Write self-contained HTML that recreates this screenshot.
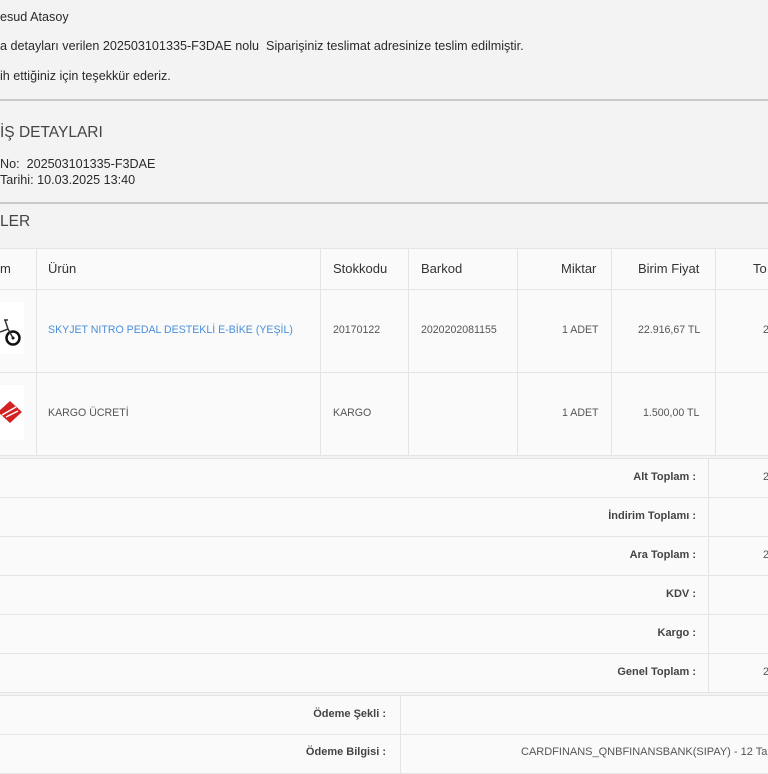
<!DOCTYPE html>
<html><head><meta charset="utf-8"><style>
*{margin:0;padding:0;box-sizing:border-box}
body{width:768px;height:768px;overflow:hidden;background:#f3f3f3;font-family:"Liberation Sans",sans-serif;color:#333;position:relative}
.a{position:absolute;white-space:nowrap}
.t{font-size:12.6px;color:#2a2a2a}
.hr{position:absolute;left:0;width:768px;height:2px;background:#c9c9c9}
.c{position:absolute;background:#fafafa;border:1px solid #e4e4e4}
.th{font-size:13px;color:#333}
.td{font-size:10.6px;color:#555}
.lb{font-size:11px;color:#444;font-weight:bold}
</style></head><body>
<div class="a t" style="left:0;top:10px">esud Atasoy</div>
<div class="a t" style="left:0;top:39px">a detayları verilen 202503101335-F3DAE nolu&nbsp; Siparişiniz teslimat adresinize teslim edilmiştir.</div>
<div class="a t" style="left:0;top:69px">ih ettiğiniz için teşekkür ederiz.</div>
<div class="hr" style="top:99px"></div>
<div class="a" style="left:0;top:124px;font-size:15.5px;color:#444">İŞ DETAYLARI</div>
<div class="a t" style="left:0;top:157px">No:&nbsp; 202503101335-F3DAE</div>
<div class="a t" style="left:0;top:173px">Tarihi: 10.03.2025 13:40</div>
<div class="hr" style="top:202px"></div>
<div class="a" style="left:0;top:213px;font-size:15.5px;color:#444">LER</div>

<div class="c" style="left:-2px;top:248px;width:39px;height:42px"></div>
<div class="c" style="left:36px;top:248px;width:285px;height:42px"></div>
<div class="c" style="left:320px;top:248px;width:89px;height:42px"></div>
<div class="c" style="left:408px;top:248px;width:110px;height:42px"></div>
<div class="c" style="left:517px;top:248px;width:95px;height:42px"></div>
<div class="c" style="left:611px;top:248px;width:105px;height:42px"></div>
<div class="c" style="left:715px;top:248px;width:60px;height:42px"></div>
<div class="a th" style="left:0;top:261px">m</div>
<div class="a th" style="left:48px;top:261px">Ürün</div>
<div class="a th" style="left:333px;top:261px">Stokkodu</div>
<div class="a th" style="left:421px;top:261px">Barkod</div>
<div class="a th" style="left:561px;top:261px">Miktar</div>
<div class="a th" style="left:638px;top:261px">Birim Fiyat</div>
<div class="a th" style="left:753px;top:261px">To</div>

<div class="c" style="left:-2px;top:289px;width:39px;height:84px"></div>
<div class="c" style="left:36px;top:289px;width:285px;height:84px"></div>
<div class="c" style="left:320px;top:289px;width:89px;height:84px"></div>
<div class="c" style="left:408px;top:289px;width:110px;height:84px"></div>
<div class="c" style="left:517px;top:289px;width:95px;height:84px"></div>
<div class="c" style="left:611px;top:289px;width:105px;height:84px"></div>
<div class="c" style="left:715px;top:289px;width:60px;height:84px"></div>
<div class="a" style="left:0;top:302px;width:24px;height:52px;background:#fff"></div>
<svg class="a" style="left:0;top:302px" width="24" height="52"><circle cx="13" cy="36" r="6.5" fill="none" stroke="#111" stroke-width="2.5"/><circle cx="13" cy="36" r="1.5" fill="#111"/><path d="M0 30 L8 27 L13 36 M5 18 L8 27 M4 18 h4" stroke="#333" stroke-width="1.5" fill="none"/></svg>
<div class="a td" style="left:48px;top:324px;color:#4a90d9">SKYJET NITRO PEDAL DESTEKLİ E-BİKE (YEŞİL)</div>
<div class="a td" style="left:333px;top:324px">20170122</div>
<div class="a td" style="left:421px;top:324px">2020202081155</div>
<div class="a td" style="left:562px;top:324px">1 ADET</div>
<div class="a td" style="left:638px;top:324px">22.916,67 TL</div>
<div class="a td" style="left:763px;top:324px">2</div>

<div class="c" style="left:-2px;top:372px;width:39px;height:84px"></div>
<div class="c" style="left:36px;top:372px;width:285px;height:84px"></div>
<div class="c" style="left:320px;top:372px;width:89px;height:84px"></div>
<div class="c" style="left:408px;top:372px;width:110px;height:84px"></div>
<div class="c" style="left:517px;top:372px;width:95px;height:84px"></div>
<div class="c" style="left:611px;top:372px;width:105px;height:84px"></div>
<div class="c" style="left:715px;top:372px;width:60px;height:84px"></div>
<div class="a" style="left:0;top:385px;width:24px;height:55px;background:#fff"></div>
<svg class="a" style="left:0;top:385px" width="24" height="55"><path d="M10 16 L22 27 L10 38 L-2 27 Z" fill="#d42020"/><path d="M2 30 L16 22 M6 32 L18 26" stroke="#fff" stroke-width="1.5"/></svg>
<div class="a td" style="left:48px;top:407px">KARGO ÜCRETİ</div>
<div class="a td" style="left:333px;top:407px">KARGO</div>
<div class="a td" style="left:562px;top:407px">1 ADET</div>
<div class="a td" style="left:643px;top:407px">1.500,00 TL</div>

<div class="c" style="left:-2px;top:458px;width:711px;height:40px"></div><div class="c" style="left:708px;top:458px;width:70px;height:40px"></div>
<div class="c" style="left:-2px;top:497px;width:711px;height:40px"></div><div class="c" style="left:708px;top:497px;width:70px;height:40px"></div>
<div class="c" style="left:-2px;top:536px;width:711px;height:40px"></div><div class="c" style="left:708px;top:536px;width:70px;height:40px"></div>
<div class="c" style="left:-2px;top:575px;width:711px;height:40px"></div><div class="c" style="left:708px;top:575px;width:70px;height:40px"></div>
<div class="c" style="left:-2px;top:614px;width:711px;height:40px"></div><div class="c" style="left:708px;top:614px;width:70px;height:40px"></div>
<div class="c" style="left:-2px;top:653px;width:711px;height:40px"></div><div class="c" style="left:708px;top:653px;width:70px;height:40px"></div>
<div class="a lb" style="right:72px;top:471px">Alt Toplam :</div>
<div class="a lb" style="right:72px;top:510px">İndirim Toplamı :</div>
<div class="a lb" style="right:72px;top:549px">Ara Toplam :</div>
<div class="a lb" style="right:72px;top:588px">KDV :</div>
<div class="a lb" style="right:72px;top:627px">Kargo :</div>
<div class="a lb" style="right:72px;top:666px">Genel Toplam :</div>
<div class="a td" style="left:763px;top:471px">2</div>
<div class="a td" style="left:763px;top:549px">2</div>
<div class="a td" style="left:763px;top:666px">2</div>

<div class="c" style="left:-2px;top:695px;width:403px;height:40px"></div><div class="c" style="left:400px;top:695px;width:380px;height:40px"></div>
<div class="c" style="left:-2px;top:734px;width:403px;height:40px"></div><div class="c" style="left:400px;top:734px;width:380px;height:40px"></div>
<div class="a lb" style="right:382px;top:708px">Ödeme Şekli :</div>
<div class="a lb" style="right:382px;top:746px">Ödeme Bilgisi :</div>
<div class="a td" style="left:521px;top:746px;font-size:11px">CARDFINANS_QNBFINANSBANK(SIPAY) - 12 Taksit</div>
</body></html>
